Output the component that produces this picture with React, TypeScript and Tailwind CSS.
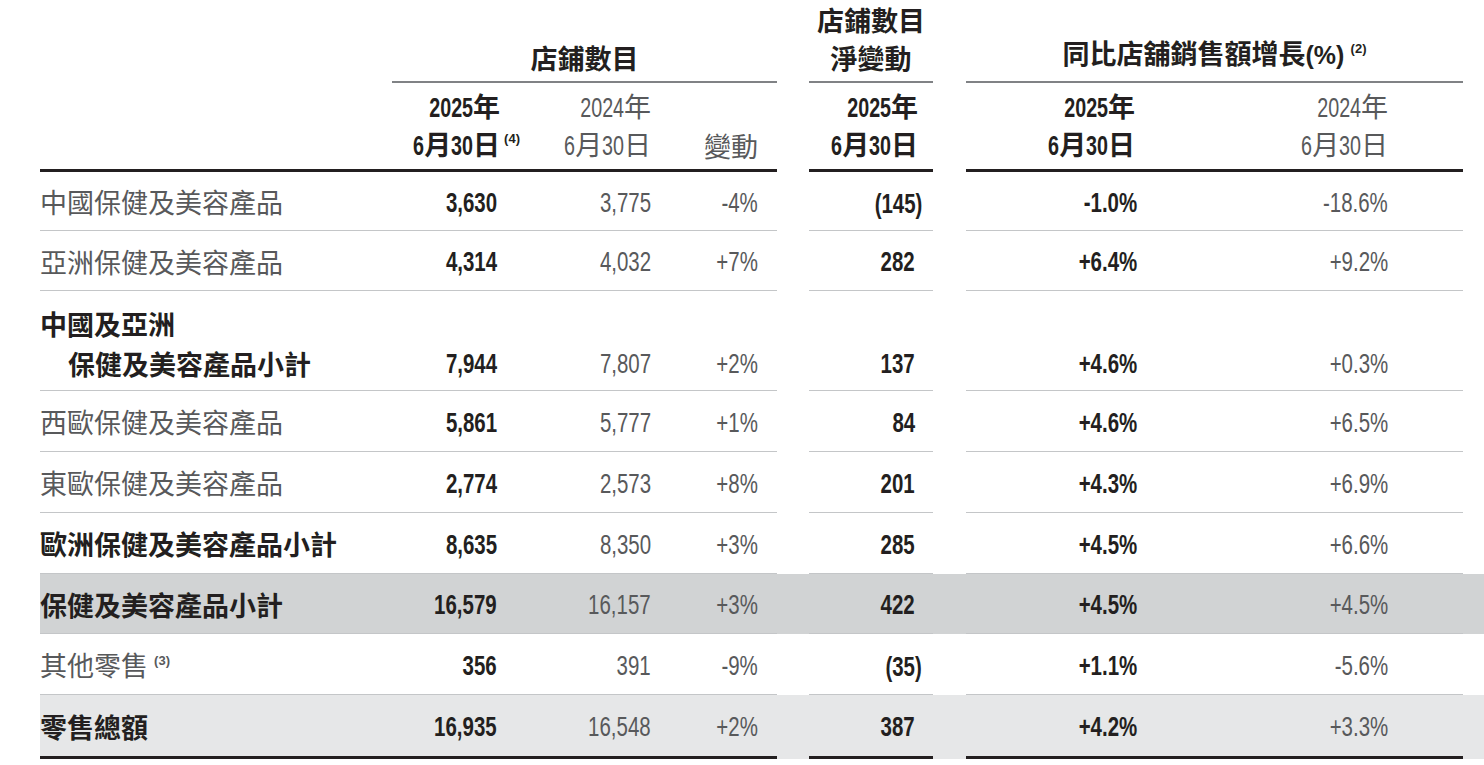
import type { ReactNode } from "react";

const grid =
  "grid grid-cols-[352px_137px_141px_107px_32px_124px_33px_249px_248px]";
const font = "font-['Noto_Sans_CJK_TC',sans-serif]";
const dark = "text-[#231f20]";
const grey = "text-[#58595b]";

// Arial / Liberation Sans advance widths (em) for the glyphs used in numbers
const adv: Record<string, number> = { ",": 0.278, ".": 0.278, "+": 0.584, "-": 0.333, "(": 0.333, ")": 0.333, "%": 0.889 };
const SX = 0.73;

// condensed figures: Liberation Sans squeezed horizontally
const C = ({ t, size = 28 }: { t: string; size?: number }) => {
  const w = [...t].reduce((s, ch) => s + (adv[ch] ?? 0.556), 0) * size;
  return (
    <span
      className="inline-block origin-right scale-x-[0.73] font-['Liberation_Sans',sans-serif]"
      style={{ marginLeft: -(1 - SX) * w }}
    >
      {t}
    </span>
  );
};

interface RowData {
  label: ReactNode;
  bold?: boolean;
  v25: string;
  v24: string;
  chg: string;
  net: string;
  y25: string;
  y24: string;
  bg?: string;
  h: string;
  last?: boolean;
}

const Sup = ({ n, pos = "relative -top-[11px]" }: { n: string; pos?: string }) => (
  <span className={`${pos} font-['Liberation_Sans',sans-serif] text-[13px] leading-none font-bold`}>({n})</span>
);

// hanging parenthesis so digits stay aligned
const Num = ({ v }: { v: string }) =>
  v.startsWith("(") ? (
    <span className="-mr-[7px]">
      <C t={v} />
    </span>
  ) : (
    <C t={v} />
  );

const rows: RowData[] = [
  { label: "中國保健及美容產品", v25: "3,630", v24: "3,775", chg: "-4%", net: "(145)", y25: "-1.0%", y24: "-18.6%", h: "h-[59px]" },
  { label: "亞洲保健及美容產品", v25: "4,314", v24: "4,032", chg: "+7%", net: "282", y25: "+6.4%", y24: "+9.2%", h: "h-[60px]" },
  {
    label: (
      <div className="flex flex-col leading-[40px]">
        <span>中國及亞洲</span>
        <span className="pl-[28px]">保健及美容產品小計</span>
      </div>
    ),
    bold: true,
    v25: "7,944", v24: "7,807", chg: "+2%", net: "137", y25: "+4.6%", y24: "+0.3%",
    h: "h-[100px]",
  },
  { label: "西歐保健及美容產品", v25: "5,861", v24: "5,777", chg: "+1%", net: "84", y25: "+4.6%", y24: "+6.5%", h: "h-[61px]" },
  { label: "東歐保健及美容產品", v25: "2,774", v24: "2,573", chg: "+8%", net: "201", y25: "+4.3%", y24: "+6.9%", h: "h-[61px]" },
  { label: "歐洲保健及美容產品小計", bold: true, v25: "8,635", v24: "8,350", chg: "+3%", net: "285", y25: "+4.5%", y24: "+6.6%", h: "h-[61px]" },
  { label: "保健及美容產品小計", bold: true, v25: "16,579", v24: "16,157", chg: "+3%", net: "422", y25: "+4.5%", y24: "+4.5%", bg: "bg-[#d1d3d4]", h: "h-[60px]" },
  {
    label: (
      <span>
        其他零售 <Sup n="3" />
      </span>
    ),
    v25: "356", v24: "391", chg: "-9%", net: "(35)", y25: "+1.1%", y24: "-5.6%", h: "h-[61px]",
  },
  { label: "零售總額", bold: true, v25: "16,935", v24: "16,548", chg: "+2%", net: "387", y25: "+4.2%", y24: "+3.3%", bg: "bg-[#e6e7e8]", h: "h-[64px]", last: true },
];

function DataRow({ r }: { r: RowData }) {
  const line = r.last ? "border-b-[3px] border-[#231f20]" : "border-b border-[#c4c6c8]";
  const tall = r.h === "h-[100px]";
  const cell = `flex ${tall ? "items-end pb-[6px] leading-[40px]" : "items-center pt-[3px]"} ${line}`;
  const num = `${cell} justify-end text-[28px]`;
  return (
    <div className={`${grid} ${r.h} ${r.bg ?? ""}`}>
      <div className={`${cell} text-[27px] ${r.bold ? `font-bold ${dark}` : grey}`}>{r.label}</div>
      <div className={`${num} pr-[32px] font-bold ${dark}`}><Num v={r.v25} /></div>
      <div className={`${num} pr-[19px] ${grey}`}><Num v={r.v24} /></div>
      <div className={`${num} pr-[19px] ${grey}`}><Num v={r.chg} /></div>
      <div />
      <div className={`${num} pr-[18px] font-bold ${dark}`}><Num v={r.net} /></div>
      <div />
      <div className={`${num} pr-[78px] font-bold ${dark}`}><Num v={r.y25} /></div>
      <div className={`${num} pr-[75px] ${grey}`}><Num v={r.y24} /></div>
    </div>
  );
}

const Date2 = ({ y, sup }: { y: string; sup?: boolean }) => (
  <>
    <span className="whitespace-nowrap">
      <C t={y} />年
    </span>
    <span className="relative whitespace-nowrap">
      <C t="6" />月<C t="30" />日
      {sup && <Sup n="4" pos="absolute -right-[20px] top-[6px]" />}
    </span>
  </>
);

export default function App() {
  const groupLine = "border-b-2 border-[#808285]";
  const thick = "border-b-[3px] border-[#231f20]";
  const head2 = `flex flex-col items-end justify-end pb-[5px] leading-[36px] ${thick}`;
  return (
    <div className={`w-[1484px] h-[765px] bg-white pl-[40px] ${font}`}>
      {/* group headers */}
      <div className={`${grid} h-[83px] text-[27px] font-bold ${dark}`}>
        <div />
        <div className={`col-span-3 flex items-end justify-center pb-[4px] leading-[38px] ${groupLine}`}>
          店鋪數目
        </div>
        <div />
        <div className={`flex flex-col items-center justify-end pb-[4px] leading-[38px] ${groupLine}`}>
          <span>店鋪數目</span>
          <span>淨變動</span>
        </div>
        <div />
        <div className={`col-span-2 flex items-end justify-center pb-[7px] leading-[38px] ${groupLine}`}>
          <span className="whitespace-nowrap">
            同比店舖銷售額增長
            <span className="font-['Liberation_Sans',sans-serif] text-[25px]">(%)</span> <Sup n="2" />
          </span>
        </div>
      </div>

      {/* date headers */}
      <div className={`${grid} h-[89px] text-[27px]`}>
        <div className={thick} />
        <div className={`${head2} pr-[29px] font-bold ${dark}`}>
          <Date2 y="2025" sup />
        </div>
        <div className={`${head2} pr-[19px] ${grey}`}>
          <Date2 y="2024" />
        </div>
        <div className={`${head2} pr-[19px] ${grey}`}>
          <span>變動</span>
        </div>
        <div />
        <div className={`${head2} pr-[15px] font-bold ${dark}`}>
          <Date2 y="2025" />
        </div>
        <div />
        <div className={`${head2} pr-[80px] font-bold ${dark}`}>
          <Date2 y="2025" />
        </div>
        <div className={`${head2} pr-[75px] ${grey}`}>
          <Date2 y="2024" />
        </div>
      </div>

      {rows.map((r, i) => (
        <DataRow key={i} r={r} />
      ))}
    </div>
  );
}
